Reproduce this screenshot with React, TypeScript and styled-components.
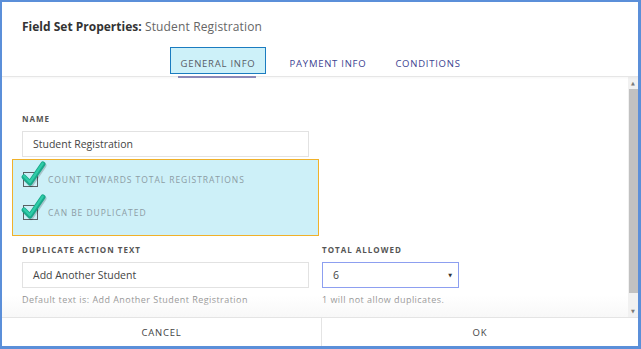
import React from "react";
import styled, { createGlobalStyle } from "styled-components";

const GlobalStyle = createGlobalStyle`
  html, body {
    margin: 0;
    padding: 0;
    background: #ffffff;
  }
  * {
    box-sizing: border-box;
  }
`;

const FONT = `"Open Sans", "DejaVu Sans", sans-serif`;

const Frame = styled.div`
  width: 641px;
  height: 349px;
  border: 2px solid #5b8fd9;
  border-bottom-width: 3px;
  border-right-width: 3px;
  display: flex;
  flex-direction: column;
  font-family: ${FONT};
  background: #fff;
  overflow: hidden;
`;

const Header = styled.div`
  height: 75px;
  flex-shrink: 0;
  border-bottom: 1px solid #e6e6e6;
  box-shadow: 0 1px 2px rgba(0, 0, 0, 0.04);
  display: flex;
  flex-direction: column;
  position: relative;
  z-index: 1;
`;

const Title = styled.div`
  padding: 16px 0 0 20px;
  font-size: 12px;
  color: #666;
  letter-spacing: 0.15px;
  b {
    color: #333;
    font-weight: 700;
    letter-spacing: 0;
  }
`;

const Tabs = styled.div`
  display: flex;
  align-items: flex-end;
  padding-left: 168px;
  margin-top: 12px;
`;

const Tab = styled.div<{ $active?: boolean; $w: number }>`
  position: relative;
  width: ${(p) => p.$w}px;
  height: 27px;
  display: flex;
  align-items: center;
  justify-content: center;
  font-size: 9.5px;
  letter-spacing: 0.75px;
  padding-top: 5px;
  color: ${(p) => (p.$active ? "#585d66" : "#3c4390")};
  background: ${(p) => (p.$active ? "#cdf1f9" : "transparent")};
  border: 1px solid ${(p) => (p.$active ? "#1b7cc0" : "transparent")};
  &::after {
    content: "";
    display: ${(p) => (p.$active ? "block" : "none")};
    position: absolute;
    left: 7px;
    right: 9px;
    bottom: -5px;
    height: 2px;
    background: #8b89b8;
  }
`;

const BodyRow = styled.div`
  flex: 1;
  display: flex;
  min-height: 0;
`;

const Content = styled.div`
  flex: 1;
  position: relative;
  padding: 36px 0 0 20px;
`;

const Fade = styled.div`
  position: absolute;
  left: 0;
  right: 0;
  bottom: 0;
  height: 22px;
  background: linear-gradient(to bottom, rgba(255, 255, 255, 0), rgba(245, 245, 245, 0.7));
  pointer-events: none;
`;

const Label = styled.div`
  font-size: 8px;
  font-weight: 700;
  letter-spacing: 1px;
  color: #555;
  text-transform: uppercase;
  height: 13px;
`;

const Input = styled.div<{ $w: number; $focus?: boolean }>`
  width: ${(p) => p.$w}px;
  height: 26px;
  margin-top: 5px;
  border: 1px solid ${(p) => (p.$focus ? "#8d9ff0" : "#e2e2e2")};
  display: flex;
  align-items: center;
  justify-content: space-between;
  padding: 0 6px 0 10px;
  font-size: 10.5px;
  color: #444;
`;

const Caret = styled.span`
  font-size: 5px;
  color: #333;
`;

const Help = styled.div`
  font-size: 9px;
  letter-spacing: 0.45px;
  color: #888;
  margin-top: 5px;
`;

const Group = styled.div`
  width: 307px;
  margin: 2px 0 0 -10px;
  padding: 9px 0 0 10px;
  height: 77px;
  background: #cdf0f8;
  border: 1px solid #f0b12a;
  display: flex;
  flex-direction: column;
  gap: 15px;
`;

const CheckRow = styled.div`
  display: flex;
  align-items: center;
  gap: 10px;
  height: 18px;
`;

const Box = styled.div`
  position: relative;
  width: 15px;
  height: 15px;
  border: 1.5px solid #5b5f63;
  margin-top: 3px;
`;

const Tick = styled.svg`
  position: absolute;
  left: -3px;
  top: -13px;
  overflow: visible;
`;

const CheckText = styled.span`
  font-size: 8.5px;
  letter-spacing: 0.95px;
  color: #8c9ca4;
  padding-top: 3px;
`;

const Columns = styled.div`
  display: flex;
  gap: 13px;
  margin-top: 8px;
`;

const Col = styled.div`
  display: flex;
  flex-direction: column;
`;

const Scrollbar = styled.div`
  width: 10px;
  background: #f1f1f1;
  display: flex;
  flex-direction: column;
  align-items: center;
`;

const Arrow = styled.div`
  height: 12px;
  width: 10px;
  display: flex;
  align-items: center;
  justify-content: center;
  font-size: 5px;
  color: #7a7a7a;
`;

const Thumb = styled.div`
  width: 9px;
  height: 204px;
  background: #c1c1c1;
`;

const Spacer = styled.div`
  flex: 1;
`;

const Footer = styled.div`
  height: 29px;
  flex-shrink: 0;
  border-top: 1px solid #e4e4e4;
  display: flex;
`;

const FootButton = styled.div<{ $w: number; $divider?: boolean }>`
  width: ${(p) => p.$w}px;
  display: flex;
  align-items: center;
  justify-content: center;
  font-size: 9.5px;
  letter-spacing: 0.8px;
  color: #444;
  border-left: ${(p) => (p.$divider ? "1px solid #e4e4e4" : "none")};
`;

const CheckMark = () => (
  <Tick width="24" height="26" viewBox="0 0 24 26">
    <path d="M3 17 L9 23 L22 4" fill="none" stroke="rgba(0,0,0,0.18)" strokeWidth="5" strokeLinecap="round" strokeLinejoin="round" transform="translate(1,1.5)" />
    <path d="M3 17 L9 23 L22 4" fill="none" stroke="#1aa88a" strokeWidth="5" strokeLinecap="round" strokeLinejoin="round" />
    <path d="M3 16.2 L9 22.2 L21.6 3.6" fill="none" stroke="#2fcca8" strokeWidth="2.4" strokeLinecap="round" strokeLinejoin="round" />
  </Tick>
);

const Check = ({ label }: { label: string }) => (
  <CheckRow>
    <Box>
      <CheckMark />
    </Box>
    <CheckText>{label}</CheckText>
  </CheckRow>
);

export default function App() {
  return (
    <>
      <GlobalStyle />
      <Frame>
        <Header>
          <Title>
            <b>Field Set Properties:</b> Student Registration
          </Title>
          <Tabs>
            <Tab $active $w={96}>GENERAL INFO</Tab>
            <Tab $w={124}>PAYMENT INFO</Tab>
            <Tab $w={76}>CONDITIONS</Tab>
          </Tabs>
        </Header>
        <BodyRow>
          <Content>
            <Label>Name</Label>
            <Input $w={287}>Student Registration</Input>
            <Group>
              <Check label="COUNT TOWARDS TOTAL REGISTRATIONS" />
              <Check label="CAN BE DUPLICATED" />
            </Group>
            <Columns>
              <Col>
                <Label>Duplicate Action Text</Label>
                <Input $w={287}>Add Another Student</Input>
                <Help>Default text is: Add Another Student Registration</Help>
              </Col>
              <Col>
                <Label>Total Allowed</Label>
                <Input $w={137} $focus>
                  <span>6</span>
                  <Caret>▼</Caret>
                </Input>
                <Help>1 will not allow duplicates.</Help>
              </Col>
            </Columns>
            <Fade />
          </Content>
          <Scrollbar>
            <Arrow>▲</Arrow>
            <Thumb />
            <Spacer />
            <Arrow>▼</Arrow>
          </Scrollbar>
        </BodyRow>
        <Footer>
          <FootButton $w={319}>CANCEL</FootButton>
          <FootButton $w={317} $divider>OK</FootButton>
        </Footer>
      </Frame>
    </>
  );
}
